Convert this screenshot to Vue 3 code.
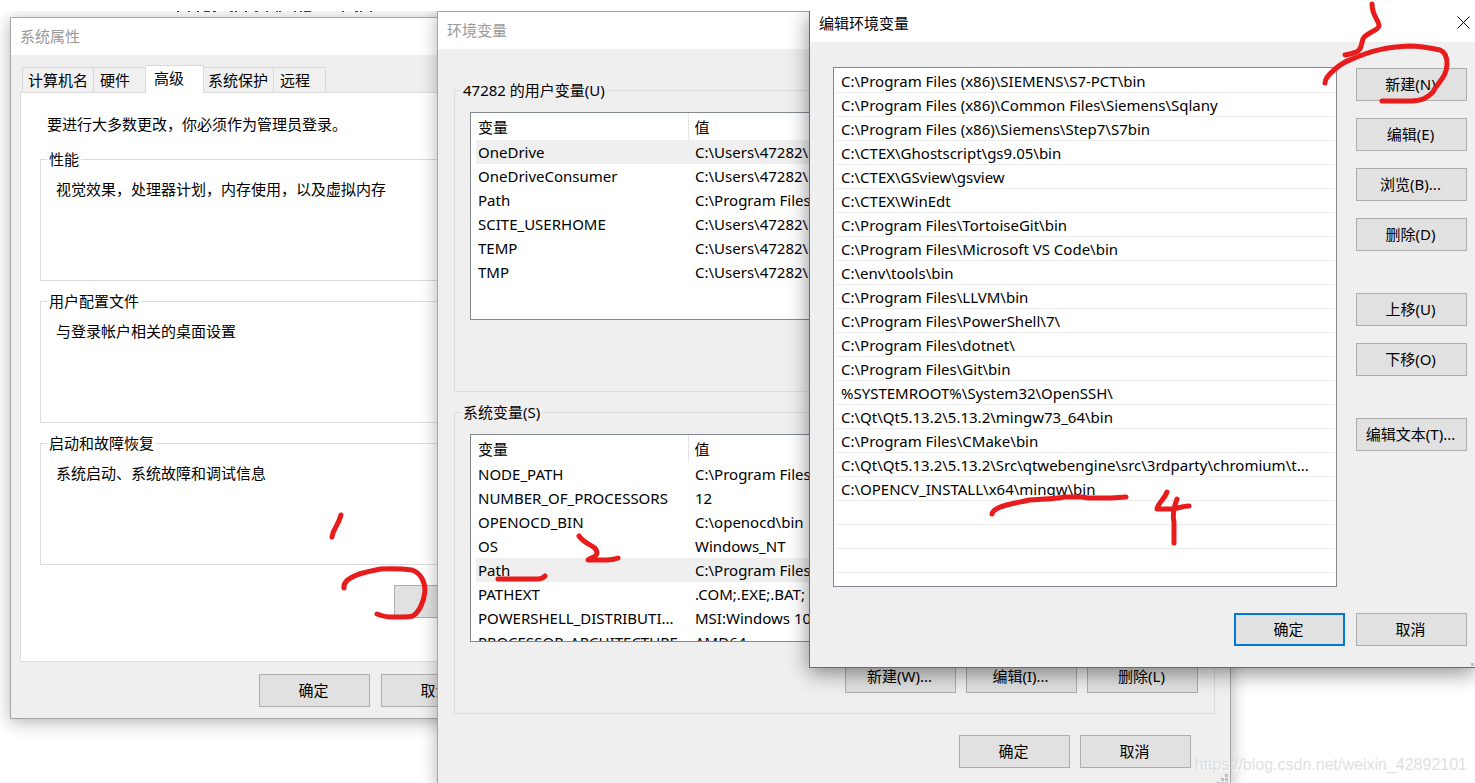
<script setup>
import { ref } from 'vue'

const tabs = ['计算机名', '硬件', '高级', '系统保护', '远程']
const activeTab = ref('高级')

const sections = [
  { title: '性能', text: '视觉效果，处理器计划，内存使用，以及虚拟内存' },
  { title: '用户配置文件', text: '与登录帐户相关的桌面设置' },
  { title: '启动和故障恢复', text: '系统启动、系统故障和调试信息' },
]

const variableGroups = [
  {
    title: '47282 的用户变量(U)',
    selected: 'OneDrive',
    rows: [
      ['OneDrive', 'C:\\Users\\47282\\'],
      ['OneDriveConsumer', 'C:\\Users\\47282\\'],
      ['Path', 'C:\\Program Files'],
      ['SCITE_USERHOME', 'C:\\Users\\47282\\'],
      ['TEMP', 'C:\\Users\\47282\\'],
      ['TMP', 'C:\\Users\\47282\\'],
    ],
    actions: [],
  },
  {
    title: '系统变量(S)',
    selected: 'Path',
    rows: [
      ['NODE_PATH', 'C:\\Program Files'],
      ['NUMBER_OF_PROCESSORS', '12'],
      ['OPENOCD_BIN', 'C:\\openocd\\bin'],
      ['OS', 'Windows_NT'],
      ['Path', 'C:\\Program Files'],
      ['PATHEXT', '.COM;.EXE;.BAT;'],
      ['POWERSHELL_DISTRIBUTI...', 'MSI:Windows 10'],
      ['PROCESSOR_ARCHITECTURE', 'AMD64'],
    ],
    actions: ['新建(W)...', '编辑(I)...', '删除(L)'],
  },
]

const paths = [
  'C:\\Program Files (x86)\\SIEMENS\\S7-PCT\\bin',
  'C:\\Program Files (x86)\\Common Files\\Siemens\\Sqlany',
  'C:\\Program Files (x86)\\Siemens\\Step7\\S7bin',
  'C:\\CTEX\\Ghostscript\\gs9.05\\bin',
  'C:\\CTEX\\GSview\\gsview',
  'C:\\CTEX\\WinEdt',
  'C:\\Program Files\\TortoiseGit\\bin',
  'C:\\Program Files\\Microsoft VS Code\\bin',
  'C:\\env\\tools\\bin',
  'C:\\Program Files\\LLVM\\bin',
  'C:\\Program Files\\PowerShell\\7\\',
  'C:\\Program Files\\dotnet\\',
  'C:\\Program Files\\Git\\bin',
  '%SYSTEMROOT%\\System32\\OpenSSH\\',
  'C:\\Qt\\Qt5.13.2\\5.13.2\\mingw73_64\\bin',
  'C:\\Program Files\\CMake\\bin',
  'C:\\Qt\\Qt5.13.2\\5.13.2\\Src\\qtwebengine\\src\\3rdparty\\chromium\\t...',
  'C:\\OPENCV_INSTALL\\x64\\mingw\\bin',
  '',
  '',
  '',
]

const sideActions = [
  ['新建(N)', '编辑(E)', '浏览(B)...', '删除(D)'],
  ['上移(U)', '下移(O)'],
  ['编辑文本(T)...'],
]
</script>

<template>
  <main class="screen">
    <div class="desktop">
      <svg class="behind" width="200" height="1" aria-hidden="true">
        <path
          d="M2 0.5h2M13 0.5h2M22 0.5h2M29 0.5h6M38 0.5h3M55 0.5h3M60 0.5h2M70 0.5h2M80 0.5h3M91 0.5h2M101 0.5h2M104 0.5h2M119 0.5h2M125 0.5h2M129 0.5h7M167 0.5h2M180 0.5h3M185 0.5h2M195 0.5h2"
        />
      </svg>

      <section class="window system" aria-label="系统属性">
        <header class="title">系统属性</header>
        <div class="tabs" role="tablist">
          <button
            v-for="tab in tabs"
            :key="tab"
            type="button"
            role="tab"
            class="tab"
            :class="{ active: tab === activeTab }"
            :aria-selected="tab === activeTab"
            @click="activeTab = tab"
          >
            {{ tab }}
          </button>
        </div>
        <div class="panel">
          <p class="intro">要进行大多数更改，你必须作为管理员登录。</p>
          <fieldset v-for="s in sections" :key="s.title" class="group section">
            <legend>{{ s.title }}</legend>
            <p>{{ s.text }}</p>
          </fieldset>
          <div class="panel-actions">
            <button type="button" class="btn wide" aria-label="环境变量"></button>
          </div>
        </div>
        <footer class="system-actions">
          <button type="button" class="btn">确定</button>
          <button type="button" class="btn">取消</button>
        </footer>
      </section>

      <section class="window variables" aria-label="环境变量">
        <header class="title">环境变量</header>
        <div class="variables-body">
          <fieldset v-for="g in variableGroups" :key="g.title" class="group vars">
            <legend>{{ g.title }}</legend>
            <div class="list">
              <table>
                <thead>
                  <tr>
                    <th class="name">变量</th>
                    <th>值</th>
                  </tr>
                </thead>
                <tbody>
                  <tr v-for="r in g.rows" :key="r[0]" :class="{ selected: r[0] === g.selected }">
                    <td>{{ r[0] }}</td>
                    <td>{{ r[1] }}</td>
                  </tr>
                </tbody>
              </table>
            </div>
            <div class="group-actions">
              <button v-for="a in g.actions" :key="a" type="button" class="btn">{{ a }}</button>
            </div>
          </fieldset>
        </div>
        <footer class="variables-actions">
          <button type="button" class="btn">确定</button>
          <button type="button" class="btn">取消</button>
        </footer>
        <svg class="grip" width="12" height="12" aria-hidden="true">
          <path d="M8 0h3v3h-3zM4 4h3v3h-3zM8 4h3v3h-3zM0 8h3v3h-3zM4 8h3v3h-3zM8 8h3v3h-3z" />
        </svg>
      </section>

      <section class="window editor" aria-label="编辑环境变量">
        <header class="title">
          <span>编辑环境变量</span>
          <button type="button" class="close" aria-label="关闭">
            <svg width="13" height="13" viewBox="0 0 13 13" aria-hidden="true">
              <path d="M0.5 0.5L12.5 12.5M12.5 0.5L0.5 12.5" />
            </svg>
          </button>
        </header>
        <div class="editor-body">
          <ul class="paths">
            <li v-for="(p, i) in paths" :key="i">{{ p }}</li>
          </ul>
          <div class="side">
            <div v-for="(set, i) in sideActions" :key="i" class="side-set">
              <button v-for="a in set" :key="a" type="button" class="btn">{{ a }}</button>
            </div>
          </div>
        </div>
        <footer class="editor-actions">
          <button type="button" class="btn default">确定</button>
          <button type="button" class="btn">取消</button>
        </footer>
        <svg class="grip" width="3" height="4" aria-hidden="true">
          <path d="M0 0h3v3h-3z" />
        </svg>
      </section>
    </div>

    <svg class="ink" width="1475" height="783" viewBox="0 0 1475 783" aria-hidden="true">
      <path d="M341 515C338 526 333 529 332 537" />
      <path d="M344 588C342 575 372 571 381 569Q397 568 412 570C421 573 425 582 425 591C424 602 419 612 413 616Q409 617 404 617H391Q385 617 377 614" />
      <path d="M579 536C586 546 597 545 597 553C597 557 590 558 588 560H607Q613 560 618 558" />
      <path d="M498 579H538Q542 579 545 576" />
      <path d="M1372 4C1372 16 1379 20 1379 26C1378 31 1365 33 1363 39C1361 44 1362 50 1356 52Q1352 54 1345 55" />
      <path d="M1325 83C1325 75 1343 62 1350 60C1372 50 1388 47 1410 46Q1421 46 1440 50C1445 52 1447 58 1447 64C1447 77 1437 83 1433 92C1427 98 1422 101 1411 101H1382" />
      <path d="M992 514C994 505 1018 503 1029 500C1043 499 1056 499 1064 497H1082L1088 498H1111L1126 497" />
      <path d="M1167 492C1164 500 1158 503 1157 509H1170C1178 509 1181 506 1189 506M1177 499C1174 507 1172 514 1174 522V543" />
    </svg>

    <div class="watermark">https://blog.csdn.net/weixin_42892101</div>
  </main>
</template>

<style>
body {
  background: #fff;
}
</style>

<style scoped>
.screen {
  position: relative;
  height: 100vh;
  overflow: hidden;
  padding-top: 11px;
  box-sizing: border-box;
  color: #000;
  font: 15px/24px "Noto Sans", "Noto Sans CJK SC", sans-serif;
}

.screen *,
.screen *::before {
  box-sizing: border-box;
}

.desktop {
  position: relative;
  height: 100%;
  overflow: hidden;
  background: #fff;
}

.behind {
  position: absolute;
  left: 175px;
  top: 0;
  stroke: #1f3f94;
  fill: none;
}

.window {
  position: absolute;
  display: flex;
  flex-direction: column;
  background: #efefef;
  border: 1px solid #a5a5a5;
  box-shadow: 0 3px 16px rgba(0, 0, 0, 0.3);
}

.title {
  display: flex;
  align-items: center;
  height: 37px;
  flex: none;
  padding: 0 9px 2px;
  background: #fff;
  color: #999;
}

.btn {
  width: 111px;
  height: 33px;
  padding: 0 2px 2px 0;
  flex: none;
  border: 1px solid #adadad;
  border-radius: 0;
  background: #e1e1e1;
  color: #000;
  font: inherit;
  white-space: nowrap;
}

.btn.wide {
  width: 200px;
}

.btn.default {
  border: 2px solid #0078d7;
}

.group {
  position: relative;
  margin: 0;
  padding: 0;
  min-width: 0;
  border: 1px solid #dcdcdc;
}

.group legend {
  height: 24px;
  margin-left: 6px;
  padding: 0 2px;
}

p {
  margin: 0;
}

/* System properties */
.system {
  left: 10px;
  top: 6px;
  width: 614px;
}

.tabs {
  display: flex;
  align-items: flex-end;
  height: 37px;
  padding: 0 11px;
}

.tab {
  height: 25px;
  padding: 0 15px 0 6px;
  border: 1px solid #d9d9d9;
  border-bottom: 0;
  border-left-width: 0;
  border-radius: 0;
  background: #f0f0f0;
  color: #000;
  font: inherit;
}

.tab:first-child {
  padding: 0 5px;
  border-left-width: 1px;
}

.tab:nth-child(4) {
  padding: 0 5px 0 4px;
}

.tab.active {
  height: 28px;
  margin-bottom: -1px;
  padding: 0 19px 5px 8px;
  background: #fff;
  z-index: 1;
}

.panel {
  margin: 0 9px;
  height: 570px;
  padding: 19px 19px 0;
  border: 1px solid #dcdcdc;
  background: #fff;
}

.intro {
  padding-left: 7px;
  margin-bottom: 11px;
}

.section {
  height: 134px;
  margin-bottom: 8px;
}

.section p {
  padding: 6px 15px;
}

.panel-actions {
  display: flex;
  justify-content: flex-end;
  padding-top: 12px;
}

.system-actions {
  display: flex;
  gap: 11px;
  padding: 12px 0 11px 248px;
}

/* Environment variables */
.variables {
  left: 437px;
  top: 0;
  width: 794px;
}

.variables-body {
  display: flex;
  flex-direction: column;
  gap: 8px;
  padding: 29px 15px 0 16px;
}

.vars {
  height: 314px;
  padding: 0 16px 0 15px;
}

.vars legend {
  margin-left: -9px;
}

.list {
  height: 208px;
  margin-top: 10px;
  overflow: hidden;
  padding: 0 5px;
  border: 1px solid #828790;
  background: #fff;
}

.list table {
  width: 100%;
  table-layout: fixed;
  border-collapse: collapse;
}

.list th {
  height: 27px;
  padding: 0 6px;
  font-weight: 400;
  text-align: left;
}

.list th.name {
  width: 212px;
  padding: 0 2px;
  border-right: 1px solid #e5e5e5;
}

.list td {
  height: 24px;
  padding: 0 2px;
  white-space: nowrap;
}

.list td + td {
  padding-left: 7px;
}

.list .selected {
  background: #efefef;
}

.group-actions {
  display: flex;
  justify-content: flex-end;
  gap: 10px;
  padding-top: 18px;
}

.variables-actions {
  display: flex;
  justify-content: flex-end;
  gap: 10px;
  padding: 21px 39px 18px;
}

.grip {
  position: absolute;
  right: 1px;
  bottom: 0;
  fill: #bfbfbf;
}

/* Path editor */
.editor {
  left: 809px;
  right: 0;
  top: 0;
  border: solid #6b6b6b;
  border-width: 0 0 1px 1px;
  box-shadow: 0 5px 20px rgba(0, 0, 0, 0.45);
}

.editor .title {
  justify-content: space-between;
  height: 31px;
  padding: 0 5px 8px 9px;
  color: #000;
}

.close {
  display: flex;
  padding: 0;
  border: 0;
  background: none;
}

.close svg {
  fill: none;
  stroke: #000;
}

.editor-body {
  display: flex;
  gap: 19px;
  padding: 25px 8px 0 23px;
}

.paths {
  flex: 1;
  min-width: 0;
  height: 520px;
  margin: 0;
  padding: 1px;
  border: 1px solid #828790;
  background: #fff;
  list-style: none;
}

.paths li {
  height: 24px;
  overflow: hidden;
  padding-left: 6px;
  border-bottom: 1px solid #ededed;
  white-space: nowrap;
}

.side {
  display: flex;
  flex-direction: column;
  gap: 42px;
  padding-top: 1px;
}

.side-set {
  display: flex;
  flex-direction: column;
  gap: 17px;
}

.editor-actions {
  display: flex;
  justify-content: flex-end;
  gap: 11px;
  padding: 26px 8px 21px;
}

.ink {
  position: absolute;
  left: 0;
  top: 0;
  pointer-events: none;
  fill: none;
  stroke: #e81c1c;
  stroke-width: 5;
  stroke-linecap: round;
  stroke-linejoin: round;
}

.watermark {
  position: absolute;
  right: 8px;
  bottom: 6px;
  color: rgba(215, 215, 215, 0.8);
  font: 16px/24px "Liberation Sans", Arial, sans-serif;
  text-shadow: 1px 1px 0 rgba(255, 255, 255, 0.8);
}
</style>
